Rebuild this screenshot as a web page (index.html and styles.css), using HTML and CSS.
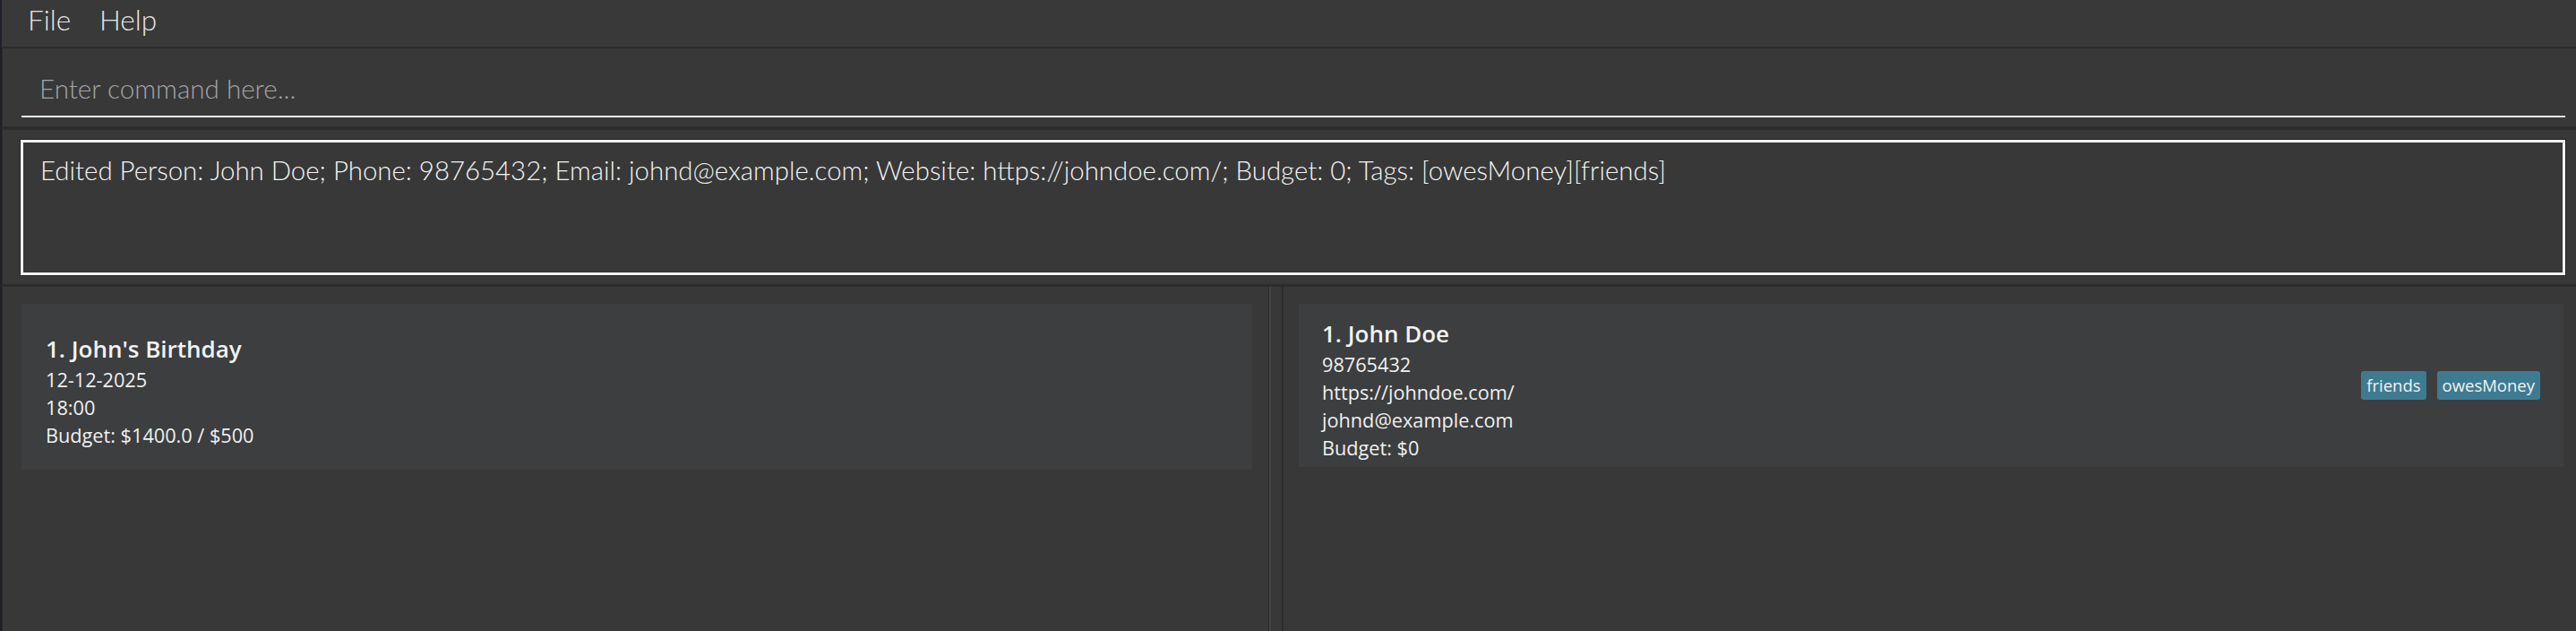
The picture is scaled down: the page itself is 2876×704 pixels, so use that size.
FILE: index.html
```html
<!DOCTYPE html>
<html lang="en">
<head>
<meta charset="utf-8">
<title>Address Book</title>
<link rel="stylesheet" href="styles.css">
</head>
<body>
<div class="app">
  <div class="menubar">
    <span class="menu-item">File</span>
    <span class="menu-item">Help</span>
  </div>
  <div class="command-panel">
    <div class="command-field"><span class="placeholder">Enter command here...</span></div>
  </div>
  <div class="result-panel">
    <div class="result-box">Edited Person: John Doe; Phone: 98765432; Email: johnd@example.com; Website: https://johndoe.com/; Budget: 0; Tags: [owesMoney][friends]</div>
  </div>
  <div class="lists">
    <div class="list-panel left">
      <div class="card event-card">
        <div class="card-info">
          <div class="card-title">1. John's Birthday</div>
          <div class="card-line">12-12-2025</div>
          <div class="card-line">18:00</div>
          <div class="card-line">Budget: $1400.0 / $500</div>
        </div>
      </div>
    </div>
    <div class="divider"></div>
    <div class="list-panel right">
      <div class="card person-card">
        <div class="card-info">
          <div class="card-title">1. John Doe</div>
          <div class="card-line">98765432</div>
          <div class="card-line">https://johndoe.com/</div>
          <div class="card-line">johnd@example.com</div>
          <div class="card-line">Budget: $0</div>
        </div>
        <div class="tags">
          <span class="tag">friends</span>
          <span class="tag">owesMoney</span>
        </div>
      </div>
    </div>
  </div>
</div>
</body>
</html>
```

FILE: styles.css
```css
html, body {
  margin: 0;
  padding: 0;
  background: #1f2127;
  overflow: hidden;
}

.app {
  margin-left: 2px;
  height: 704px;
  display: flex;
  flex-direction: column;
  background: #383838;
  color: #ffffff;
  font-family: "Open Sans", "Noto Sans", sans-serif;
}

.menubar {
  height: 54px;
  flex: none;
  box-sizing: border-box;
  display: flex;
  align-items: flex-start;
  padding-left: 13px;
  border-bottom: 2px solid #2c2c2c;
  background: #393939;
}

.menu-item {
  padding: 0 16px;
  font-family: "Lato", "Open Sans", sans-serif;
  font-size: 31.5px;
  font-weight: 300;
  color: #e6e6e6;
  line-height: 44px;
}

.command-panel {
  flex: none;
  height: 89px;
  box-sizing: border-box;
  padding: 18px 12px 0 21px;
  border-left: 1px solid #2c2c2c;
  border-bottom: 2px solid #2c2c2c;
}

.command-field {
  height: 59px;
  box-sizing: border-box;
  display: flex;
  align-items: center;
  padding-left: 20px;
  padding-bottom: 4px;
  border-bottom: 2px solid #eeeeee;
}

.placeholder {
  font-family: "Lato", "Open Sans", sans-serif;
  font-size: 29.6px;
  font-weight: 300;
  color: #a2a4a8;
}

.result-panel {
  flex: none;
  height: 177px;
  box-sizing: border-box;
  padding: 11px 12px 10px 20px;
  border-left: 1px solid #2c2c2c;
  border-top: 2px solid #2c2c2c;
  border-bottom: 3px solid #2c2c2c;
}

.result-box {
  height: 151px;
  box-sizing: border-box;
  border: 3px solid #f0f0f0;
  box-shadow: 0 0 0 1px #262626;
  padding: 11px 20px 0 19px;
  font-family: "Lato", "Open Sans", sans-serif;
  font-size: 29.4px;
  font-weight: 300;
  line-height: 40px;
  color: #f4f4f4;
  background: #383838;
}

.lists {
  flex: 1;
  display: grid;
  grid-template-columns: 1415px 14px 1fr;
  min-height: 0;
}

.list-panel {
  box-sizing: border-box;
  padding-top: 19px;
}

.list-panel.left {
  padding-left: 21px;
  padding-right: 18px;
  border-left: 1px solid #2c2c2c;
  border-right: 1px solid #2c2c2c;
}

.list-panel.right {
  padding-left: 17px;
  padding-right: 14px;
  border-left: 2px solid #2c2c2c;
}

.divider {
  border-left: 2px solid #444444;
  background: #383838;
}

.card {
  box-sizing: border-box;
  background: #3c3e3f;
  display: flex;
  align-items: center;
  justify-content: space-between;
  padding-left: 27px;
  padding-right: 26px;
}

.event-card {
  height: 185px;
}

.person-card {
  height: 182px;
  padding-left: 26px;
}

.card-info {
  padding-top: 8px;
}

.card-title {
  font-size: 26px;
  font-weight: 600;
  line-height: 38px;
  color: #f2f2f2;
}

.card-line {
  font-size: 21.7px;
  line-height: 31px;
  color: #f0f0f0;
}

.tags {
  display: flex;
  gap: 12px;
}

.tag {
  background: #3e7b91;
  color: #f2f2f2;
  font-size: 18.5px;
  line-height: 32px;
  padding: 0 6px;
  border-radius: 3px;
}
```
